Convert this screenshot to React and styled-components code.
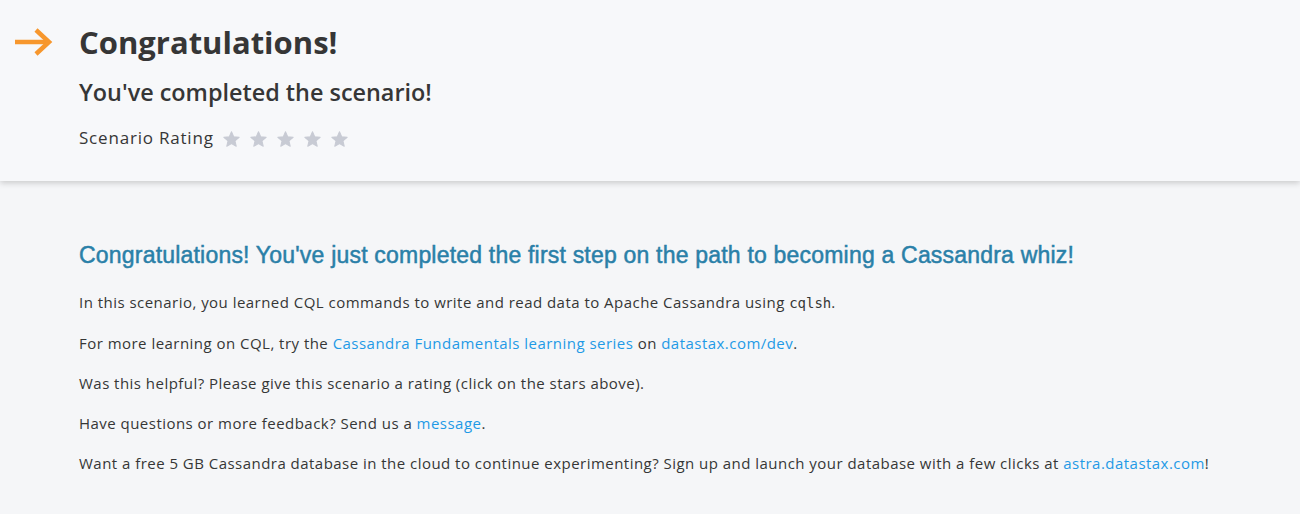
import React from "react";
import styled, { createGlobalStyle } from "styled-components";

const Global = createGlobalStyle`
  html, body { margin: 0; padding: 0; background: #f5f6f8; }
  body { font-family: "Open Sans", "Lato", sans-serif; color: #363636; }
`;

const Page = styled.div`
  width: 1300px;
  min-height: 514px;
  background: #f5f6f8;
  overflow: hidden;
`;

const Header = styled.header`
  height: 181px;
  box-sizing: border-box;
  background: #f7f8fa;
  box-shadow: 0 2px 6px rgba(0, 0, 0, 0.18);
  display: grid;
  grid-template-columns: 79px 1fr;
  padding-top: 20px;
  position: relative;
`;

const ArrowCell = styled.div`
  padding-left: 14px;
  padding-top: 8px;
`;

const HeaderText = styled.div`
  display: flex;
  flex-direction: column;
`;

const Title = styled.h1`
  margin: 0;
  font-family: "Open Sans", sans-serif;
  font-weight: 700;
  font-size: 31px;
  line-height: 44px;
  color: #363636;
`;

const Subtitle = styled.h2`
  margin: 12px 0 0;
  font-family: "Open Sans", sans-serif;
  font-weight: 600;
  font-size: 23.4px;
  line-height: 32px;
  color: #363636;
`;

const RatingRow = styled.div`
  margin-top: 18px;
  display: flex;
  align-items: center;
  gap: 9px;
  font-size: 17px;
  letter-spacing: 0.8px;
  line-height: 24px;
  font-weight: 400;
  color: #363636;
`;

const Stars = styled.div`
  display: flex;
  gap: 10px;
  padding-top: 1px;
`;

const Content = styled.main`
  padding: 59px 79px 0;
`;

const Lead = styled.h3`
  margin: 0 0 22px;
  font-family: "Liberation Sans", Arial, sans-serif;
  font-weight: 400;
  font-size: 23px;
  line-height: 30px;
  color: #2a80a8;
  letter-spacing: 0.2px;
  -webkit-text-stroke: 0.5px #2a80a8;
`;

const Para = styled.p`
  margin: 0 0 20px;
  font-size: 15px;
  letter-spacing: 0.47px;
  line-height: 20px;
  color: #363636;
`;

const Link = styled.a`
  color: #1f9ae6;
  text-decoration: none;
`;

const Code = styled.code`
  font-family: "DejaVu Sans Mono", monospace;
  font-size: 14px;
  letter-spacing: 0;
`;

const Star = () => (
  <svg width="17" height="16" viewBox="0 0 24 23">
    <path
      d="M12 1 L15.1 8.3 L23 9 L17 14.2 L18.8 22 L12 17.9 L5.2 22 L7 14.2 L1 9 L8.9 8.3 Z"
      fill="#c8cbd4"
      stroke="#c8cbd4"
      strokeWidth="1.5"
      strokeLinejoin="round"
    />
  </svg>
);

const Arrow = () => (
  <svg width="40" height="30" viewBox="0 0 40 30">
    <path d="M1 14 H35" stroke="#f7972d" strokeWidth="4.5" fill="none" />
    <path d="M22 2 L35 14 L22 26" stroke="#f7972d" strokeWidth="4.5" fill="none" />
  </svg>
);

export default function App() {
  return (
    <Page>
      <Global />
      <Header>
        <ArrowCell>
          <Arrow />
        </ArrowCell>
        <HeaderText>
          <Title>Congratulations!</Title>
          <Subtitle>You've completed the scenario!</Subtitle>
          <RatingRow>
            Scenario Rating
            <Stars>
              {[0, 1, 2, 3, 4].map((i) => (
                <Star key={i} />
              ))}
            </Stars>
          </RatingRow>
        </HeaderText>
      </Header>
      <Content>
        <Lead>
          Congratulations! You've just completed the first step on the path to becoming a Cassandra whiz!
        </Lead>
        <Para>
          In this scenario, you learned CQL commands to write and read data to Apache Cassandra using <Code>cqlsh</Code>.
        </Para>
        <Para>
          For more learning on CQL, try the <Link href="#">Cassandra Fundamentals learning series</Link> on{" "}
          <Link href="#">datastax.com/dev</Link>.
        </Para>
        <Para>Was this helpful? Please give this scenario a rating (click on the stars above).</Para>
        <Para>
          Have questions or more feedback? Send us a <Link href="#">message</Link>.
        </Para>
        <Para>
          Want a free 5 GB Cassandra database in the cloud to continue experimenting? Sign up and launch your database
          with a few clicks at <Link href="#">astra.datastax.com</Link>!
        </Para>
      </Content>
    </Page>
  );
}
